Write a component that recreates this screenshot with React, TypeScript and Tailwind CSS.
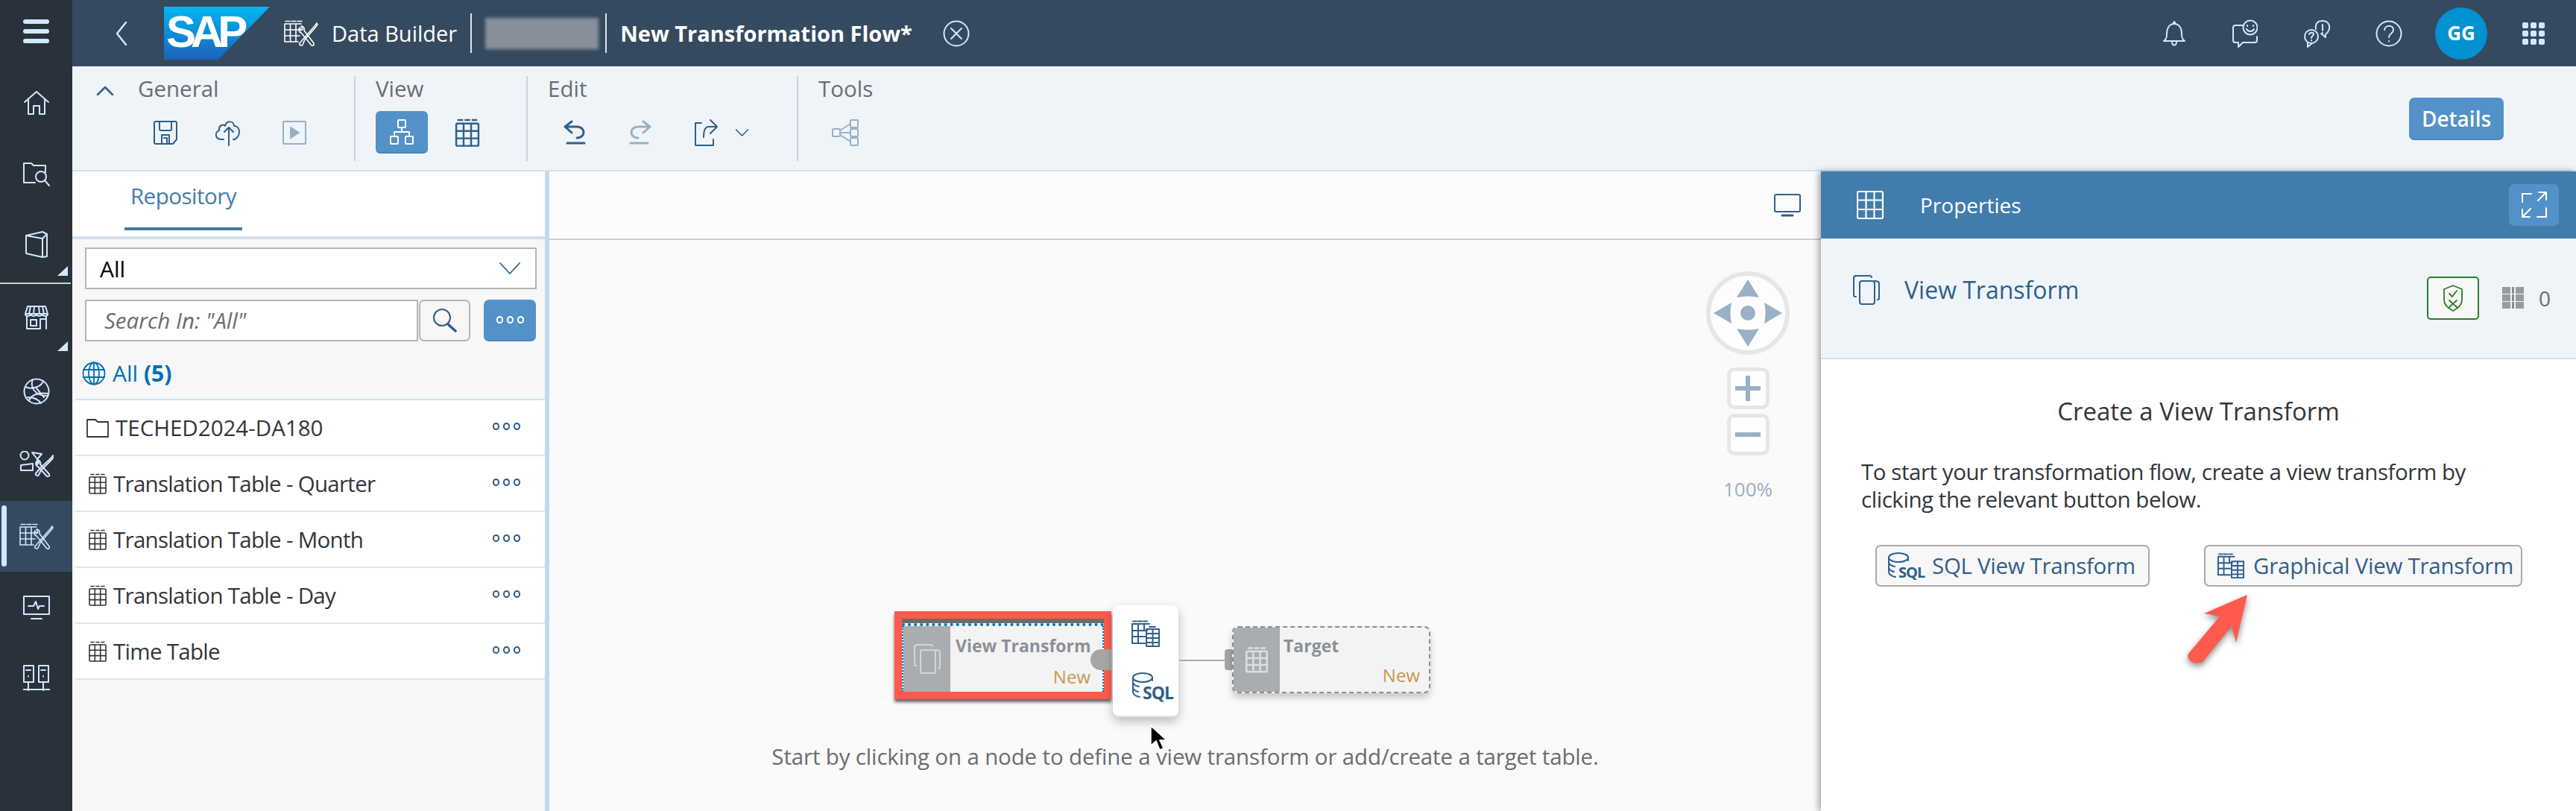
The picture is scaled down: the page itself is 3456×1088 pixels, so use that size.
import React from "react";

type IconProps = { className?: string; w: number; h: number; vb: string; sw?: number; children: React.ReactNode };

const Ico: React.FC<IconProps> = ({ className, w, h, vb, sw = 2, children }) => (
  <svg width={w} height={h} viewBox={vb} fill="none" stroke="currentColor" strokeWidth={sw} strokeLinecap="round" strokeLinejoin="round" className={className}>
    {children}
  </svg>
);

// table with the dashed header row, used all over the place
const TableGlyph: React.FC<{ className?: string; w?: number; h?: number; sw?: number }> = ({ className, w = 24, h = 28, sw = 1.6 }) => (
  <Ico w={w} h={h} vb="0 0 24 28" sw={sw} className={className}>
    <path d="M3 1.5h4M10 1.5h4M17 1.5h4" />
    <rect x="1" y="5" width="22" height="22" rx="1" />
    <path d="M8.3 5v22M15.7 5v22M1 12.3h22M1 19.6h22" />
  </Ico>
);

const BuilderGlyph: React.FC<{ className?: string; w?: number; h?: number }> = ({ className, w = 46, h = 36 }) => (
  <Ico w={w} h={h} vb="0 0 46 36" sw={1.6} className={className}>
    <path d="M2 1.5h6M10 1.5h6M18 1.5h6" />
    <path d="M23 5H1v24h18M1 13h22M1 21h20M8.5 5v24M16 5v24" />
    <path d="M21 10c-2 3-1 6 2 7l14 17c2 1 4-1 3-3L27 14c1-3-1-6-4-6l2 4-2 2z" />
    <path d="M41 8l3-4 1 2-3 4-14 16-3 7c-1 2-5 1-4-2l6-7z" />
  </Ico>
);

const SqlGlyph: React.FC<{ className?: string; big?: boolean }> = ({ className, big }) => (
  <div className={`relative ${big ? "w-[54px] h-[36px]" : "w-[50px] h-[34px]"} ${className ?? ""}`}>
    <Ico w={32} h={34} vb="0 0 32 34" className="absolute left-0 top-0">
      <ellipse cx="15" cy="7" rx="13" ry="6" />
      <path d="M2 7v6c0 3 3 5 8 6M28 7v4M2 13c0 0 0 5 0 7 0 3 3 5 7 6M2 20v6c0 4 4 6 9 7" />
    </Ico>
    <span className={`absolute left-[15px] bottom-[-3px] font-bold tracking-[-1px] ${big ? "text-[23px]" : "text-[20px]"} leading-none`}>SQL</span>
  </div>
);

const CopyGlyph: React.FC<{ className?: string; w?: number; h?: number }> = ({ className, w = 36, h = 40 }) => (
  <Ico w={w} h={h} vb="0 0 36 40" sw={2} className={className}>
    <path d="M4 29H3c-1 0-2-1-2-2V4c0-2 1-3 3-3h18c2 0 3 1 3 2" />
    <path d="M29 8c3 0 6 0 6 3v20c0 1-1 2-2 2" />
    <rect x="9" y="8" width="20" height="31" rx="3" />
  </Ico>
);

const Dots: React.FC<{ className?: string }> = ({ className }) => (
  <div className={`flex gap-[5px] ${className ?? ""}`}>
    <i className="block w-[9px] h-[10px] rounded-full border-2 border-current" />
    <i className="block w-[9px] h-[10px] rounded-full border-2 border-current" />
    <i className="block w-[9px] h-[10px] rounded-full border-2 border-current" />
  </div>
);

const NavItem: React.FC<{ children: React.ReactNode; active?: boolean; corner?: boolean; className?: string }> = ({ children, active, corner, className }) => (
  <div className={`relative h-[95px] w-full shrink-0 flex items-center justify-center ${active ? "bg-[#354a5f]" : ""} ${className ?? ""}`}>
    {active && <div className="absolute left-[2px] top-[6px] bottom-[7px] w-[7px] rounded-full bg-[#d1e8ff]" />}
    {children}
    {corner && (
      <svg width="14" height="13" viewBox="0 0 14 13" className="absolute left-[77px] bottom-[5px]">
        <path d="M14 0v13H0z" fill="#d1e8ff" />
      </svg>
    )}
  </div>
);

const Sidebar = () => (
  <aside className="w-[97px] h-[1088px] shrink-0 bg-[#29313a] text-[#d1e8ff] flex flex-col">
    <div className="h-[90px] flex flex-col items-center pt-[26px] gap-[7px]">
      <i className="block w-[35px] h-[6px] rounded-full bg-[#d1e8ff]" />
      <i className="block w-[35px] h-[6px] rounded-full bg-[#d1e8ff]" />
      <i className="block w-[35px] h-[6px] rounded-full bg-[#d1e8ff]" />
    </div>
    <NavItem>
      <Ico w={36} h={32} vb="0 0 36 32">
        <path d="M2 15L18 1l16 14M7 12v19h7V20h8v11h7V12" />
      </Ico>
    </NavItem>
    <NavItem>
      <Ico w={36} h={36} vb="0 0 36 36">
        <path d="M1 30V4h10l3 3h16v9M1 30h15" />
        <circle cx="24" cy="22" r="7" />
        <path d="M29 27l6 7" />
      </Ico>
    </NavItem>
    <NavItem corner>
      <Ico w={32} h={36} vb="0 0 32 36">
        <path d="M2 6l22-5 6 3v30l-6 1L2 30zM2 6l22 4v25M24 10l6-6" />
      </Ico>
    </NavItem>
    <div className="h-[2px] w-[95px] mt-[4px] bg-[#cfcfcf] shrink-0" />
    <NavItem corner className="pb-[6px]">
      <Ico w={32} h={32} vb="0 0 32 32">
        <path d="M4 1h24l3 10H1zM1 11c0 4 6 4 7.500 0 1 4 6 4 7.500 0 1 4 6 4 7.500 0 1 4 7.500 4 7.500 0M8 1L6 11M13 1l-1 10M19 1l1 10M24 1l2 10" />
        <path d="M3 31V15M29 31V15M3 31h18V18h8M8 19h8v8H8z" />
      </Ico>
    </NavItem>
    <NavItem className="mt-[1px]">
      <Ico w={36} h={36} vb="0 0 36 36">
        <circle cx="18" cy="18" r="16.500" />
        <path d="M3 12c8 4 22 0 24-8M13 2c-4 10 2 22 20 22M8 31c2-8 12-12 26-10M18 14l10 12M6 26c8 0 14 2 18 8" />
      </Ico>
    </NavItem>
    <NavItem className="mt-[3px]">
      <Ico w={46} h={36} vb="0 0 46 36">
        <circle cx="7" cy="6" r="5.500" />
        <path d="M17 2l13 2-6 7zM2 19l16-2v9H2z" />
        <path d="M23 14c-2 3-1 6 2 7l12 13c2 1 4-1 3-3L28 18c1-3-1-6-4-6l2 4-2 2z" />
        <path d="M42 10l3-4 1 2-3 4-14 14-3 6c-1 2-5 1-4-2l6-7z" />
      </Ico>
    </NavItem>
    <NavItem active className="mt-[2px]">
      <BuilderGlyph />
    </NavItem>
    <NavItem>
      <Ico w={36} h={32} vb="0 0 36 32">
        <rect x="1" y="1" width="34" height="24" />
        <path d="M7 14h7l3-6 3 10 2-4h6M11 31h14" />
      </Ico>
    </NavItem>
    <NavItem>
      <Ico w={36} h={36} vb="0 0 36 36">
        <rect x="1" y="1" width="13" height="22" />
        <rect x="21" y="1" width="13" height="22" />
        <path d="M4 7h6M24 7h6M7 15v.5M27 15v.5M7 23v11M27 23v11M0 33h36" />
      </Ico>
    </NavItem>
  </aside>
);

const Header = () => (
  <header className="h-[89px] shrink-0 bg-[#354a5f] flex items-center text-white">
    <Ico w={16} h={32} vb="0 0 16 32" sw={2.500} className="ml-[58px] text-[#d1e8ff]">
      <path d="M14 1L2 16l12 15" />
    </Ico>
    <div className="ml-[49px] w-[142px] h-[71px] relative">
      <svg width="142" height="71" viewBox="0 0 142 71" className="absolute inset-0">
        <defs>
          <linearGradient id="sapg" x1="0" y1="0" x2="0" y2="1">
            <stop offset="0" stopColor="#00b8f1" />
            <stop offset="1" stopColor="#1d61bc" />
          </linearGradient>
        </defs>
        <path d="M0 0h142L73 71H0z" fill="url(#sapg)" />
      </svg>
      <span className="absolute left-[3px] top-[4px] font-['Liberation_Sans',sans-serif] font-bold text-[60px] leading-[60px] tracking-[-7px]">SAP</span>
    </div>
    <BuilderGlyph className="ml-[19px]" />
    <span className="ml-[18px] text-[29px] leading-none">Data Builder</span>
    <div className="ml-[18px] w-[2px] h-[53px] bg-[#dfe5ea]" />
    <div className="ml-[18px] w-[152px] h-[42px] bg-[#878f9a] blur-[2px]" />
    <div className="ml-[9px] w-[2px] h-[53px] bg-[#dfe5ea]" />
    <span className="ml-[18px] text-[29px] leading-none font-bold">New Transformation Flow*</span>
    <Ico w={36} h={36} vb="0 0 36 36" className="ml-[41px] text-[#d1e8ff]">
      <circle cx="18" cy="18" r="16.500" />
      <path d="M11 11l14 14M25 11L11 25" />
    </Ico>
    <div className="ml-auto flex items-center text-[#d1e8ff]">
      <Ico w={32} h={36} vb="0 0 32 36">
        <path d="M2 28c3-2 4-4 4-10 0-8 4-13 10-13s10 5 10 13c0 6 1 8 4 10zM14 5l2-3 2 3M13 29c0 6 6 6 6 0" />
      </Ico>
      <Ico w={34} h={38} vb="0 0 34 38" className="ml-[62px]">
        <path d="M15 8H4c-2 0-3 1-3 3v17c0 2 1 3 3 3h4v6l6-6h16c2 0 3-1 3-3v-5" />
        <circle cx="24" cy="11" r="9.500" />
        <path d="M20 8v1M28 8v1M19 13c2 4 8 4 10 0" />
      </Ico>
      <Ico w={36} h={38} vb="0 0 36 38" className="ml-[62px]">
        <circle cx="10" cy="23" r="9" />
        <path d="M5 31l0 6 6-5" />
        <path d="M16 13c-1-7 2-11 9-11s10 5 9 11c-1 3-2 5-5 7v4l-6-5" />
        <path d="M25 7v8M25 18v.5M7 20c1-3 6-3 6 0 0 2-3 2-3 5M10 28v.5" />
      </Ico>
      <Ico w={36} h={36} vb="0 0 36 36" className="ml-[60px]">
        <circle cx="18" cy="18" r="16.500" />
        <path d="M12 13c1-7 12-7 12 0 0 5-6 5-6 10M18 28v.5" />
      </Ico>
      <div className="ml-[44px] w-[70px] h-[70px] rounded-full bg-[#0092d1] flex items-center justify-center text-white text-[26px] font-bold">GG</div>
      <div className="ml-[47px] mr-[42px] grid grid-cols-3 gap-[3px]">
        {[0, 1, 2, 3, 4, 5, 6, 7, 8].map((n) => (
          <i key={n} className="block w-[8px] h-[8px] rounded-[2px] bg-[#d1e8ff]" />
        ))}
      </div>
    </div>
  </header>
);

const Toolbar = () => (
  <div className="h-[141px] shrink-0 bg-[#eff4f9] border-b-2 border-[#d3e0ee] flex items-start pt-[13px] text-[#2f5f8c] relative">
    <div className="h-[114px] w-[380px] border-r-2 border-[#ccd3da] flex flex-col">
      <div className="flex items-center h-[34px]">
        <Ico w={24} h={13} vb="0 0 24 13" sw={2.500} className="ml-[32px] mt-[4px]">
          <path d="M2 12L12 2l10 10" />
        </Ico>
        <span className="ml-[32px] text-[29.5px] leading-[34px] text-[#6a6d70]">General</span>
      </div>
      <div className="flex items-center mt-[13px] h-[57px]">
        <Ico w={32} h={32} vb="0 0 32 32" className="ml-[109px]">
          <path d="M3 1h26c1 0 2 1 2 2v22l-5 6H3c-1 0-2-1-2-2V3c0-1 1-2 2-2zM8 1v10c0 1 1 2 2 2h12c1 0 2-1 2-2V1M11 31V19h10v12M14 23h4v8" />
        </Ico>
        <Ico w={36} h={36} vb="0 0 36 36" className="ml-[51px]">
          <path d="M18 35V11M12 17l6-6 6 6" />
          <path d="M11 27H8c-9 0-9-10-3-12-1-7 6-9 8-6 2-8 12-7 12 0 8 0 10 12 1 18h-2" />
        </Ico>
        <Ico w={32} h={32} vb="0 0 32 32" className="ml-[54px] text-[#98b0c7]">
          <rect x="1" y="1" width="30" height="30" rx="1" />
          <path d="M11 9l11 7-11 7z" fill="currentColor" />
        </Ico>
      </div>
    </div>
    <div className="h-[114px] w-[231px] border-r-2 border-[#ccd3da] flex flex-col pl-[27px]">
      <span className="text-[29.5px] leading-[34px] text-[#6a6d70]">View</span>
      <div className="flex items-center mt-[13px] h-[57px]">
        <div className="w-[70px] h-[57px] rounded-[6px] bg-[#5392c9] border-b-2 border-[#4a86bb] text-white flex items-center justify-center">
          <Ico w={32} h={34} vb="0 0 32 34" sw={2}>
            <rect x="11" y="1" width="10" height="10" rx="1" />
            <rect x="1" y="23" width="10" height="10" rx="1" />
            <rect x="21" y="23" width="10" height="10" rx="1" />
            <path d="M16 11v6M6 23v-6h20v6" />
          </Ico>
        </div>
        <TableGlyph w={36} h={38} sw={1.800} className="ml-[35px]" />
      </div>
    </div>
    <div className="h-[114px] w-[363px] border-r-2 border-[#ccd3da] flex flex-col pl-[27px]">
      <span className="text-[29.5px] leading-[34px] text-[#6a6d70]">Edit</span>
      <div className="flex items-center mt-[13px] h-[57px]">
        <Ico w={32} h={34} vb="0 0 32 34" sw={3} className="ml-[20px]">
          <path d="M3 9l9-7M3 9l9 8M3 9h16c12 0 12 15 0 15M29 31H6" />
        </Ico>
        <Ico w={32} h={34} vb="0 0 32 34" sw={3} className="ml-[56px] text-[#98b0c7]">
          <path d="M29 9l-9-7M29 9l-9 8M29 9H13C1 9 1 24 13 24M3 31h23" />
        </Ico>
        <Ico w={38} h={36} vb="0 0 36 36" className="ml-[55px]">
          <path d="M10 5H2v30h24V27M31 10l-9-9M31 10l-9 9M31 10H20c-6 0-7 8-7 14" />
        </Ico>
        <Ico w={21} h={12} vb="0 0 20 12" sw={1.600} className="ml-[17px]">
          <path d="M2 2l8 8 8-8" />
        </Ico>
      </div>
    </div>
    <div className="h-[114px] flex flex-col pl-[27px]">
      <span className="text-[29.5px] leading-[34px] text-[#6a6d70]">Tools</span>
      <div className="flex items-center mt-[13px] h-[57px] text-[#98b0c7]">
        <Ico w={36} h={36} vb="0 0 36 36" className="ml-[18px]">
          <rect x="1" y="13" width="10" height="10" rx="1" />
          <rect x="25" y="1" width="10" height="10" rx="1" />
          <rect x="25" y="13" width="10" height="10" rx="1" />
          <rect x="25" y="25" width="10" height="10" rx="1" />
          <path d="M11 15l14-9M11 18h14M11 21l14 9" />
        </Ico>
      </div>
    </div>
    <button className="absolute left-[3135px] top-[42px] w-[127px] h-[57px] rounded-[7px] bg-[#5392c9] border-b-2 border-[#4a86bb] text-white text-[28px] font-semibold">Details</button>
  </div>
);

const items = ["Translation Table - Quarter", "Translation Table - Month", "Translation Table - Day", "Time Table"];

const Repository = () => (
  <section className="w-[640px] shrink-0 h-full bg-[#f7f7f7] border-r-[6px] border-[#c5d8ea] flex flex-col">
    <div className="h-[91px] shrink-0 bg-white border-b-4 border-[#d3e0ee] pl-[70px]">
      <div className="w-[158px] h-[79px] border-b-4 border-[#427cac] text-center text-[#427cac] text-[29.5px] tracking-[-0.5px] leading-[66px]">Repository</div>
    </div>
    <div className="pl-[17px] pr-[11px] pt-[11px]">
      <div className="h-[56px] bg-white border-2 border-[#b5b5b5] flex items-center justify-between pl-[18px] pr-[20px] text-[30px] text-black">
        All
        <Ico w={28} h={18} vb="0 0 28 18" sw={1.800} className="text-[#2f5f8c]">
          <path d="M1 2l13 14L27 2" />
        </Ico>
      </div>
      <div className="flex mt-[14px] h-[56px]">
        <div className="w-[447px] bg-white border-2 border-[#b5b5b5] flex items-center pl-[24px] italic text-[29.5px] text-[#6a6d70]">Search In: "All"</div>
        <div className="w-[69px] ml-[1px] bg-[#f7f7f7] border-2 border-[#b5b5b5] rounded-[7px] flex items-center justify-center text-[#2f5f8c]">
          <Ico w={34} h={32} vb="0 0 34 32">
            <circle cx="13" cy="12" r="11" />
            <path d="M21 21l10 9" strokeWidth="3.500" />
          </Ico>
        </div>
        <div className="w-[70px] ml-[18px] bg-[#5392c9] rounded-[7px] border-b-2 border-[#4a86bb] flex items-center justify-center text-white">
          <Dots />
        </div>
      </div>
    </div>
    <div className="h-[77px] shrink-0 flex items-center pl-[13px] pt-[8px] text-[#0070b1] text-[30px]">
      <Ico w={32} h={32} vb="0 0 32 32" sw={1.800} className="mr-[9px]">
        <circle cx="16" cy="16" r="14.500" />
        <ellipse cx="16" cy="16" rx="7" ry="14.500" />
        <path d="M2 11h28M2 21h28M16 1.500v29" />
      </Ico>
      All&nbsp;<b>(5)</b>
    </div>
    <div className="ml-[4px] bg-white border-t-2 border-[#d3e0ee] text-[#32363a]">
      <div className="h-[75px] flex items-center border-b-2 border-[#e5e5e5] pl-[15px]">
        <Ico w={30} h={26} vb="0 0 30 26" sw={1.800} className="mr-[9px]">
          <path d="M1 25V2h11l3 3h14v20z" />
        </Ico>
        <span className="text-[29.5px] leading-none">TECHED2024-DA180</span>
        <Dots className="ml-auto mr-[33px] -mt-[4px] text-[#2f5f8c]" />
      </div>
      {items.map((name) => (
        <div key={name} className="h-[75px] flex items-center border-b-2 border-[#e5e5e5] pl-[18px]">
          <TableGlyph className="mr-[9px]" />
          <span className="text-[29.5px] tracking-[-0.7px] leading-none">{name}</span>
          <Dots className="ml-auto mr-[33px] -mt-[4px] text-[#2f5f8c]" />
        </div>
      ))}
    </div>
  </section>
);

const Canvas = () => (
  <section className="flex-1 h-full flex flex-col bg-[#fafafa]">
    <div className="h-[92px] shrink-0 bg-[#fcfcfc] border-b-2 border-[#cdcdcd] flex items-center justify-end pr-[27px] text-[#2f5f8c]">
      <Ico w={36} h={31} vb="0 0 36 31">
        <rect x="1" y="1" width="34" height="23" rx="2" />
        <path d="M11 29h14" strokeWidth="3" />
      </Ico>
    </div>
    <div className="relative flex-1">
      {/* zoom controls */}
      <div className="absolute right-[42px] top-[42px] flex flex-col items-center text-[#9ab0c6]">
        <div className="w-[112px] h-[112px] rounded-full border-[6px] border-[#e6e6e6] bg-[#fdfdfd] relative">
          <svg width="100" height="100" viewBox="0 0 100 100" fill="currentColor">
            <path d="M50 5l15 24c-10-2-20-2-30 0zM50 95l15-24c-10 2-20 2-30 0zM4 50l24-14c-2 10-2 18 0 28zM96 50L72 36c2 10 2 18 0 28z" />
            <circle cx="50" cy="50" r="10" />
          </svg>
        </div>
        <div className="mt-[17px] w-[57px] h-[56px] rounded-[10px] border-[5px] border-[#e6e6e6] bg-[#fdfdfd] flex items-center justify-center text-[46px] leading-none">
          <svg width="34" height="34" viewBox="0 0 34 34" fill="currentColor"><path d="M14 0h6v14h14v6H20v14h-6V20H0v-6h14z" /></svg>
        </div>
        <div className="mt-[6px] w-[57px] h-[56px] rounded-[10px] border-[5px] border-[#e6e6e6] bg-[#fdfdfd] flex items-center justify-center">
          <i className="block w-[34px] h-[6px] bg-[#9ab0c6]" />
        </div>
        <span className="mt-[30px] text-[26px] leading-[30px]">100%</span>
      </div>

      {/* nodes */}
      <div className="absolute left-[463px] top-[498px] w-[291px] h-[118px] border-[10px] border-[#ff5a4d] shadow-[0_4px_4px_rgba(0,0,0,0.6)] bg-[#f3f3f3]">
        <div className="h-[6px] bg-[#6b6b6b]" />
        <div className="h-[4px] border-t-4 border-dotted border-[#0070b1]" />
        <div className="flex h-[88px] border-x-2 border-dotted border-[#0070b1]">
          <div className="w-[63px] bg-[#a9adb0] flex items-center justify-center text-[#d4d6d8]">
            <CopyGlyph />
          </div>
          <div className="flex-1 relative pl-[7px] pt-[12px] text-[#8a9097] font-bold text-[23px] leading-[28px]">
            View Transform
            <span className="absolute right-[16px] bottom-[6px] text-[24px] font-normal text-[#c49a50]">New</span>
          </div>
        </div>
      </div>
      <div className="absolute left-[726px] top-[549px] w-[28px] h-[28px] rounded-l-full bg-[#a6a6a6]" />
      <div className="absolute left-[756px] top-[490px] w-[88px] h-[150px] rounded-[8px] bg-white border-b-2 border-[#e5e5e5] shadow-[0_6px_14px_rgba(0,0,0,0.25)] text-[#2f5f8c]">
        <Ico w={38} h={36} vb="0 0 38 36" sw={2} className="absolute left-[25px] top-[20px]">
          <path d="M2 1.500h5M9 1.500h5M16 1.500h5" />
          <path d="M24 5H1v26h17M1 14h20M1 22h17M9 5v26M17 5v9" />
          <rect x="20" y="12" width="17" height="23" />
          <path d="M20 18h17M20 24h17M20 30h17M28.500 12v23M24 9h8" />
        </Ico>
        <SqlGlyph big className="absolute left-[25px] top-[90px]" />
      </div>
      <div className="absolute left-[845px] top-[563px] w-[61px] h-[2px] bg-[#aaaaaa]" />
      <div className="absolute left-[906px] top-[549px] w-[11px] h-[28px] rounded-l-[4px] bg-[#a6a6a6]" />
      <div className="absolute left-[916px] top-[518px] w-[266px] h-[90px] rounded-[8px] border-2 border-dashed border-[#8a8f94] bg-[#f3f3f3] shadow-[0_6px_10px_rgba(0,0,0,0.2)] flex overflow-hidden">
        <div className="w-[62px] bg-[#a9adb0] flex items-center justify-center text-[#dcdedf]">
          <TableGlyph w={30} h={36} sw={2} />
        </div>
        <div className="flex-1 relative pl-[5px] pt-[10px] text-[#8a9097] font-bold text-[23px] leading-[28px]">
          Target
          <span className="absolute right-[12px] bottom-[8px] text-[24px] font-normal text-[#c49a50]">New</span>
        </div>
      </div>
      <svg width="30" height="38" viewBox="0 0 30 38" className="absolute left-[805px] top-[650px]">
        <path d="M2 2v26l7-6 5 12 5-2-5-11h9z" fill="#000" stroke="#fff" strokeWidth="1.500" />
      </svg>
      <p className="absolute left-0 right-0 top-[673px] text-center text-[29.5px] tracking-[-0.15px] leading-[40px] text-[#6a6d70]">
        Start by clicking on a node to define a view transform or add/create a target table.
      </p>
    </div>
  </section>
);

const Properties = () => (
  <section className="w-[1013px] shrink-0 h-full bg-white flex flex-col shadow-[-3px_0_8px_rgba(0,0,0,0.35)] z-10 relative">
    <div className="h-[90px] shrink-0 bg-[#427cac] text-white flex items-center pl-[48px] pr-[23px]">
      <Ico w={36} h={38} vb="0 0 36 38" sw={2.200}>
        <rect x="1" y="1" width="34" height="36" rx="2" />
        <path d="M12.500 1v36M23.500 1v36M1 12.500h34M1 25h34" />
      </Ico>
      <span className="ml-[49px] text-[28px]">Properties</span>
      <div className="ml-auto w-[67px] h-[56px] rounded-[7px] bg-[#5392c9] flex items-center justify-center">
        <Ico w={36} h={36} vb="0 0 36 36" sw={2}>
          <path d="M2 14V3h12M34 1L23 12M34 1v10M34 1H24M34 22v12H22M2 34l11-11M2 34V24M2 34h10" />
        </Ico>
      </div>
    </div>
    <div className="h-[162px] shrink-0 bg-[#eff4f9] border-b-2 border-[#d3e0ee] flex items-center pl-[43px] pr-[34px] text-[#2f5f8c] pb-[22px]">
      <CopyGlyph />
      <span className="ml-[33px] text-[32px]">View Transform</span>
      <div className="ml-auto w-[70px] h-[58px] mt-[22px] rounded-[5px] border-2 border-[#2b7d2b] bg-[#f7f7f7] flex items-center justify-center text-[#2b7d2b]">
        <Ico w={26} h={36} vb="0 0 26 36" sw={1.800}>
          <path d="M13 1l12 5v14c0 7-6 12-12 15C7 32 1 27 1 20V6zM8 12l4 4 6-8M8 21l10 9M18 21L8 30" />
        </Ico>
      </div>
      <div className="ml-[31px] w-[30px] h-[30px] mt-[22px] grid grid-cols-[11px_3px_11px] grid-rows-[9px_9px_9px] gap-x-[2px] gap-y-[1px]">
        {[0, 1, 2, 3, 4, 5, 6, 7, 8].map((n) => (
          <i key={n} className={`block ${n % 3 === 1 ? "bg-[#8a8a8a]" : "bg-[#9a9a9a]"}`} />
        ))}
      </div>
      <span className="ml-[19px] mt-[22px] text-[28px] text-[#6a6d70]">0</span>
    </div>
    <div className="relative flex-1 text-[#32363a]">
      <h2 className="mt-[50px] text-center text-[33px] leading-[40px] font-normal">Create a View Transform</h2>
      <p className="mt-[42px] ml-[54px] w-[840px] text-[29.5px] tracking-[-0.45px] leading-[37px]">
        To start your transformation flow, create a view transform by clicking the relevant button below.
      </p>
      <div className="flex mt-[43px] ml-[73px] text-[#2f5f8c]">
        <button className="w-[368px] h-[56px] rounded-[7px] border-2 border-[#a9a9a9] bg-[#f7f7f7] flex items-center pl-[14px] text-[29.5px] tracking-[-0.3px]">
          <SqlGlyph className="mr-[10px] -mt-[2px]" />
          SQL View Transform
        </button>
        <button className="ml-[73px] w-[427px] h-[56px] rounded-[7px] border-2 border-[#a9a9a9] bg-[#f7f7f7] flex items-center pl-[16px] text-[29.5px] tracking-[-0.25px]">
          <Ico w={36} h={38} vb="0 0 38 36" sw={2} className="mr-[12px]">
            <path d="M2 1.500h5M9 1.500h5M16 1.500h5" />
            <path d="M24 5H1v26h17M1 14h20M1 22h17M9 5v26M17 5v9" />
            <rect x="20" y="12" width="17" height="23" />
            <path d="M20 18h17M20 24h17M20 30h17M28.500 12v23" />
          </Ico>
          Graphical View Transform
        </button>
      </div>
      {/* annotation arrow */}
      <svg width="100" height="115" viewBox="0 0 100 115" className="absolute left-[482px] top-[308px] drop-shadow-[0_4px_4px_rgba(0,0,0,0.45)]">
        <path d="M90 8L32 33l21 4-42 50c-2 4 0 9 5 11 4 2 10 2 14 0l39-48 6 22z" fill="#ff5a4d" />
      </svg>
    </div>
  </section>
);

export default function App() {
  return (
    <div className="w-[3456px] h-[1088px] flex overflow-hidden bg-white font-['Open_Sans',sans-serif]">
      <Sidebar />
      <div className="flex-1 flex flex-col min-w-0">
        <Header />
        <Toolbar />
        <main className="flex-1 flex min-h-0">
          <Repository />
          <Canvas />
          <Properties />
        </main>
      </div>
    </div>
  );
}
